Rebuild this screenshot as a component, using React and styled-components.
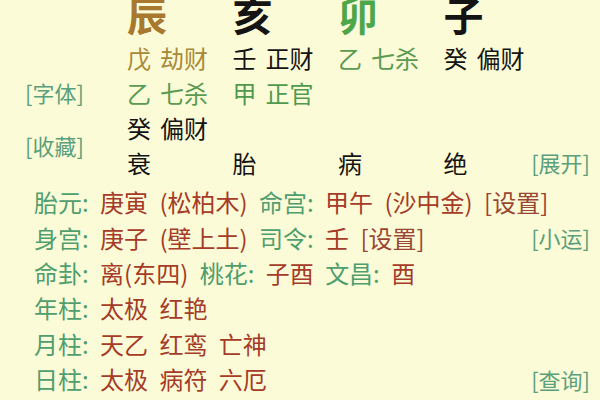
import { createGlobalStyle, styled } from "styled-components";

const GlobalStyle = createGlobalStyle`
  body {
    margin: 0;
    background: #fcfbd7;
  }
`;

const pillars = [
  { branch: "辰", color: "#a8782e" },
  { branch: "亥", color: "#141414" },
  { branch: "卯", color: "#4ea64a" },
  { branch: "子", color: "#141414" },
];

// hidden stems, one row per line, one cell per pillar
const stemRows = [
  [
    { stem: "戊", god: "劫财", color: "#a8893a" },
    { stem: "壬", god: "正财", color: "#141414" },
    { stem: "乙", god: "七杀", color: "#5b9a52" },
    { stem: "癸", god: "偏财", color: "#141414" },
  ],
  [
    { stem: "乙", god: "七杀", color: "#5b9a52" },
    { stem: "甲", god: "正官", color: "#4f9a4f" },
    null,
    null,
  ],
  [{ stem: "癸", god: "偏财", color: "#141414" }, null, null, null],
];

const stages = ["衰", "胎", "病", "绝"];

function App() {
  return (
    <>
      <GlobalStyle />
      <Page>
        <Top>
          <SideCol>
            <Link>[字体]</Link>
            <Link>[收藏]</Link>
          </SideCol>
          <PillarGrid>
            {pillars.map((p) => (
              <Branch key={p.branch} $color={p.color}>
                {p.branch}
              </Branch>
            ))}
            {stemRows.map((row, r) =>
              row.map((cell, c) =>
                cell ? (
                  <Stem key={`${r}-${c}`} $color={cell.color}>
                    <span>{cell.stem}</span>
                    <span>{cell.god}</span>
                  </Stem>
                ) : (
                  <Stem key={`${r}-${c}`} />
                )
              )
            )}
            {stages.map((s) => (
              <Stage key={s}>{s}</Stage>
            ))}
          </PillarGrid>
          <RightCol>
            <Link>[展开]</Link>
          </RightCol>
        </Top>

        <Info>
          <Row>
            <Label>胎元: </Label>
            <Value>庚寅 (松柏木) </Value>
            <Label>命宫: </Label>
            <Value>甲午 (沙中金) </Value>
            <Setting>[设置]</Setting>
          </Row>
          <Row>
            <Label>身宫: </Label>
            <Value>庚子 (壁上土) </Value>
            <Label>司令: </Label>
            <Value>壬 </Value>
            <Setting>[设置]</Setting>
            <RowLink>[小运]</RowLink>
          </Row>
          <Row>
            <Label>命卦: </Label>
            <Value>离(东四) </Value>
            <Label>桃花: </Label>
            <Value>子酉 </Value>
            <Label>文昌: </Label>
            <Value>酉</Value>
          </Row>
          <Row>
            <Label>年柱: </Label>
            <Value>太极 红艳</Value>
          </Row>
          <Row>
            <Label>月柱: </Label>
            <Value>天乙 红鸾 亡神</Value>
          </Row>
          <Row>
            <Label>日柱: </Label>
            <Value>太极 病符 六厄</Value>
            <RowLink>[查询]</RowLink>
          </Row>
        </Info>
      </Page>
    </>
  );
}

const Page = styled.div`
  width: 600px;
  height: 400px;
  overflow: hidden;
  background: #fcfbd7;
  font-family: "Noto Sans CJK SC", "Noto Sans", sans-serif;
  color: #141414;
`;

const Top = styled.div`
  display: flex;
  margin-top: -7px;
`;

const SideCol = styled.div`
  flex-shrink: 0;
  width: 102px;
  padding-left: 25px;
  padding-top: 84px;
  display: flex;
  flex-direction: column;
  align-items: flex-start;
  gap: 23px;
`;

const Link = styled.span`
  font-size: 22px;
  line-height: 30px;
  color: #5aa07c;
  white-space: nowrap;
`;

const PillarGrid = styled.div`
  flex-shrink: 0;
  display: grid;
  grid-template-columns: repeat(3, 105.5px) 87px;
  grid-template-rows: 47px repeat(4, 35px);
`;

const Branch = styled.div`
  align-self: start;
  font-size: 40px;
  font-weight: 700;
  line-height: 42px;
  color: ${(p) => p.$color};
`;

const Stem = styled.div`
  display: flex;
  align-items: center;
  gap: 9px;
  font-size: 24px;
  color: ${(p) => p.$color || "inherit"};
  white-space: nowrap;
`;

const Stage = styled.div`
  display: flex;
  align-items: center;
  font-size: 24px;
`;

const RightCol = styled.div`
  flex: 1;
  min-width: 0;
  display: flex;
  flex-direction: column;
  justify-content: flex-end;
  align-items: flex-end;
  padding-right: 10px;

  ${Link} {
    line-height: 35px;
  }
`;

const Info = styled.div`
  padding: 4px 10px 0 34px;
`;

const Row = styled.div`
  display: flex;
  align-items: center;
  height: 35.4px;
  font-size: 24px;
  word-spacing: 6px;
  white-space: pre;
`;

const Label = styled.span`
  color: #4f9e6e;
`;

const Value = styled.span`
  color: #a53b28;
`;

const Setting = styled.span`
  color: #9a4634;
`;

const RowLink = styled.span`
  margin-left: auto;
  font-size: 22px;
  word-spacing: 0;
  color: #5aa07c;
`;

export default App;
